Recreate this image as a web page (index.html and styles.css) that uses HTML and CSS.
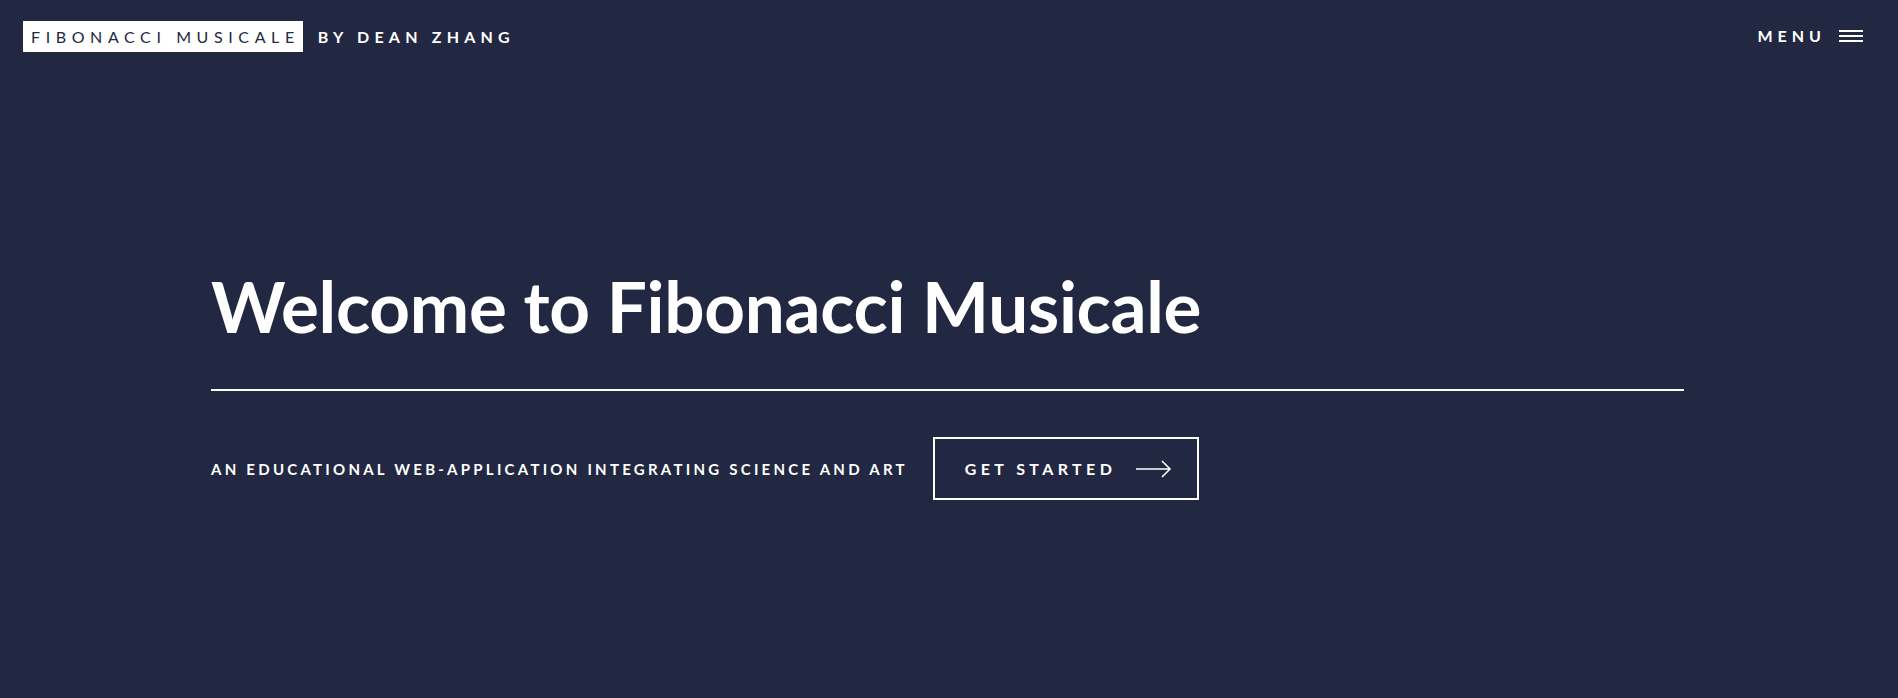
FILE: index.html
```html
<!DOCTYPE html>
<html lang="en">
<head>
<meta charset="utf-8">
<title>Fibonacci Musicale</title>
<link rel="stylesheet" href="styles.css">
</head>
<body>
<div class="page">
  <header class="topbar">
    <div class="brand">
      <span class="brand-box">FIBONACCI MUSICALE</span>
      <span class="brand-by">BY DEAN ZHANG</span>
    </div>
    <div class="menu">
      <span class="menu-label">MENU</span>
      <svg class="menu-icon" width="24" height="14" viewBox="0 0 24 14" aria-hidden="true">
        <rect x="0" y="1" width="24" height="2" fill="#fff"/>
        <rect x="0" y="6" width="24" height="2" fill="#fff"/>
        <rect x="0" y="11" width="24" height="2" fill="#fff"/>
      </svg>
    </div>
  </header>
  <main class="hero">
    <h1 class="hero-title">Welcome to Fibonacci Musicale</h1>
    <div class="hero-rule"></div>
    <div class="hero-row">
      <p class="hero-sub">AN EDUCATIONAL WEB-APPLICATION INTEGRATING SCIENCE AND ART</p>
      <a class="btn" href="#">
        <span class="btn-label">GET STARTED</span>
        <svg class="btn-arrow" width="36" height="18" viewBox="0 0 36 18" aria-hidden="true">
          <path d="M0 9 H34 M26 1 L34 9 L26 17" fill="none" stroke="#fff" stroke-width="1.6"/>
        </svg>
      </a>
    </div>
  </main>
</div>
</body>
</html>
```
FILE: styles.css
```css
* { box-sizing: border-box; }
html, body { margin: 0; padding: 0; }
body {
  background: #222842;
  color: #fff;
  font-family: "Lato", "Noto Sans", sans-serif;
  width: 1898px;
  height: 698px;
  overflow: hidden;
}
.page { display: flex; flex-direction: column; height: 100%; }
.topbar {
  display: flex;
  justify-content: space-between;
  align-items: center;
  padding: 21px 35px 0 23px;
}
.brand { display: flex; align-items: center; gap: 15px; }
.brand-box {
  background: #fff;
  color: #222842;
  font-size: 16px;
  font-weight: 400;
  letter-spacing: 5.6px;
  height: 31px;
  line-height: 31px;
  padding: 0 3px 0 8px;
}
.brand-by {
  font-size: 16px;
  font-weight: 700;
  letter-spacing: 5.2px;
}
.menu { display: flex; align-items: center; gap: 13px; margin-top: -2px; }
.menu-label { font-size: 16px; font-weight: 700; letter-spacing: 5px; }
.menu-icon { display: block; }
.hero {
  display: flex;
  flex-direction: column;
  padding: 0 214px 0 211px;
  margin-top: 218px;
}
.hero-title {
  margin: 0;
  font-size: 71px;
  font-weight: 700;
  line-height: 1;
  letter-spacing: -0.3px;
}
.hero-rule { height: 2px; background: #fff; margin-top: 48px; }
.hero-row { display: flex; align-items: center; gap: 25px; margin-top: 46px; }
.hero-sub {
  margin: 0;
  font-size: 15px;
  font-weight: 700;
  letter-spacing: 3.25px;
}
.btn {
  display: flex;
  align-items: center;
  gap: 20px;
  height: 63px;
  padding: 0 25px 0 30px;
  border: 2px solid #fff;
  color: #fff;
  text-decoration: none;
}
.btn-label { font-size: 16px; font-weight: 700; letter-spacing: 4.4px; }
.btn-arrow { display: block; }
```
